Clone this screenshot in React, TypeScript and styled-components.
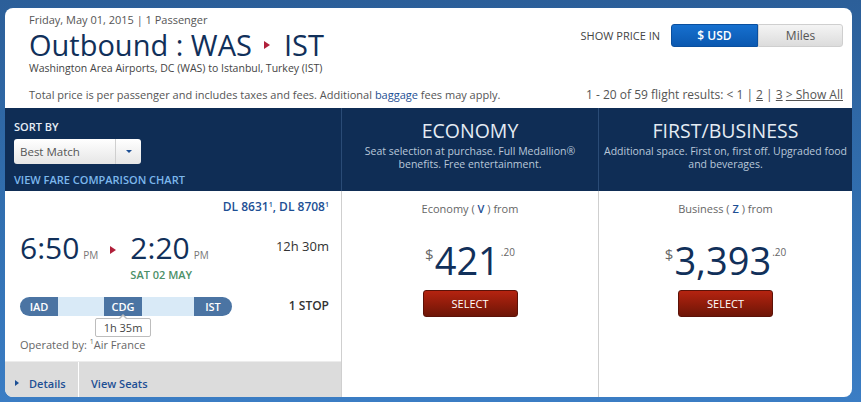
import React from "react";
import styled, { createGlobalStyle } from "styled-components";

const GlobalStyle = createGlobalStyle`
  html, body {
    margin: 0;
    padding: 0;
  }
  body {
    width: 861px;
    height: 402px;
    overflow: hidden;
    font-family: "Open Sans", "Liberation Sans", sans-serif;
    background: linear-gradient(180deg, #2c5f99 0%, #3271b3 60%, #3b7dc4 100%);
  }
`;

const Page = styled.div`
  padding: 8px 9px 5px 5px;
`;

const Panel = styled.div`
  width: 847px;
  height: 389px;
  background: #fff;
  border-radius: 8px;
  overflow: hidden;
  display: flex;
  flex-direction: column;
`;

const Top = styled.div`
  height: 101px;
  display: flex;
  flex-direction: column;
  padding: 4px 9px 0 24px;
  box-sizing: border-box;
`;

const TopRow = styled.div`
  display: flex;
  justify-content: space-between;
  align-items: flex-start;
`;

const Meta = styled.div`
  font-size: 11px;
  color: #555;
  line-height: 16px;
`;

const Title = styled.h1`
  margin: 1px 0 0 0;
  font-size: 29px;
  font-weight: 400;
  color: #11305a;
  line-height: 32px;
  display: flex;
  align-items: center;
`;

const Arrow = styled.span<{ $gap?: string }>`
  display: inline-block;
  width: 0;
  height: 0;
  border-top: 4px solid transparent;
  border-bottom: 4px solid transparent;
  border-left: 6px solid #b0203a;
  margin: ${(p) => p.$gap || "0 14px 0 12px"};
`;

const SubTitle = styled.div`
  font-size: 10.5px;
  color: #444;
  line-height: 14px;
`;

const PriceToggle = styled.div`
  display: flex;
  align-items: center;
  margin-top: 12px;
`;

const ToggleLabel = styled.span`
  font-size: 11px;
  color: #444;
  margin-right: 11px;
`;

const ToggleBtn = styled.div<{ $active?: boolean }>`
  width: ${(p) => (p.$active ? "85px" : "83px")};
  height: 21px;
  display: flex;
  align-items: center;
  justify-content: center;
  font-size: 12px;
  font-weight: ${(p) => (p.$active ? 600 : 400)};
  color: ${(p) => (p.$active ? "#fff" : "#555")};
  background: ${(p) =>
    p.$active
      ? "linear-gradient(180deg, #1670cf 0%, #0b58b0 100%)"
      : "linear-gradient(180deg, #f4f4f4 0%, #dcdcdc 100%)"};
  border: 1px solid ${(p) => (p.$active ? "#0a4f9e" : "#cfcfcf")};
  border-radius: ${(p) => (p.$active ? "3px 0 0 3px" : "0 3px 3px 0")};
`;

const InfoRow = styled.div`
  margin-top: auto;
  margin-bottom: 5px;
  display: flex;
  justify-content: space-between;
  align-items: baseline;
  font-size: 11px;
  color: #555;
`;

const Link = styled.a`
  color: #1d4f94;
  text-decoration: none;
`;

const Pager = styled.span`
  font-size: 12px;
  color: #555;
  a {
    color: #555;
    text-decoration: underline;
  }
`;

const Grid = styled.div`
  display: grid;
  grid-template-columns: 336px 1px 256px 1px 253px;
  flex: 1;
`;

const HeadCell = styled.div<{ $center?: boolean }>`
  height: 83px;
  background: #0f2d55;
  color: #fff;
  box-sizing: border-box;
  padding: ${(p) => (p.$center ? "11px 0 0" : "12px 9px 0")};
  text-align: ${(p) => (p.$center ? "center" : "left")};
  white-space: nowrap;
`;

const Divider = styled.div<{ $dark?: boolean }>`
  background: ${(p) => (p.$dark ? "#2a4b76" : "#cfcfcf")};
`;

const SortLabel = styled.div`
  font-size: 11px;
  font-weight: 600;
  color: #e6edf5;
  line-height: 14px;
`;

const Select = styled.div`
  margin-top: 5px;
  width: 127px;
  height: 25px;
  display: flex;
  border-radius: 3px;
  background: linear-gradient(180deg, #ffffff 0%, #e6e6e6 100%);
  overflow: hidden;
`;

const SelectText = styled.div`
  flex: 1;
  font-size: 11.5px;
  color: #555;
  padding-left: 6px;
  display: flex;
  align-items: center;
`;

const SelectArrow = styled.div`
  width: 25px;
  border-left: 1px solid #cfcfcf;
  display: flex;
  align-items: center;
  justify-content: center;
  &::after {
    content: "";
    border-left: 3px solid transparent;
    border-right: 3px solid transparent;
    border-top: 3px solid #1d4f94;
  }
`;

const FareLink = styled.div`
  margin-top: 8px;
  font-size: 11px;
  font-weight: 600;
  color: #7cb7ec;
`;

const CabinName = styled.div`
  font-size: 19.5px;
  color: #e4ebf3;
  line-height: 24px;
`;

const CabinDesc = styled.div`
  font-size: 10.5px;
  line-height: 13px;
  color: #b9c8da;
  margin-top: 2px;
`;

const FlightCell = styled.div`
  display: flex;
  flex-direction: column;
`;

const FlightBody = styled.div`
  height: 170px;
  box-sizing: border-box;
  padding: 8px 12px 0 15px;
  display: flex;
  flex-direction: column;
`;

const FlightNums = styled.div`
  text-align: right;
  font-size: 12px;
  font-weight: 600;
  color: #1d4f94;
  line-height: 16px;
  sup {
    font-size: 7px;
    vertical-align: top;
    position: relative;
    top: -2px;
  }
`;

const TimesRow = styled.div`
  display: flex;
  justify-content: space-between;
  margin-top: 16px;
`;

const Times = styled.div`
  display: flex;
  align-items: flex-start;
`;

const TimeBlock = styled.div`
  display: flex;
  flex-direction: column;
`;

const Time = styled.div`
  font-size: 30px;
  color: #11305a;
  line-height: 34px;
  display: flex;
  align-items: baseline;
`;

const Ampm = styled.span`
  font-size: 10px;
  color: #777;
  margin-left: 4px;
`;

const ArrivalDate = styled.div`
  font-size: 11px;
  font-weight: 600;
  color: #4c9068;
  line-height: 14px;
  margin-top: -4px;
`;

const Duration = styled.div`
  font-size: 13px;
  color: #333;
  line-height: 18px;
  margin-top: 6px;
`;

const RouteRow = styled.div`
  display: flex;
  justify-content: space-between;
  align-items: center;
  margin-top: 15px;
`;

const RouteBar = styled.div`
  position: relative;
  width: 212px;
  height: 19px;
  background: #d9eaf7;
  border-radius: 10px;
  display: flex;
`;

const Airport = styled.div<{ $pos: "start" | "mid" | "end" }>`
  width: 38px;
  height: 19px;
  background: #4b74a3;
  color: #fff;
  font-size: 11px;
  font-weight: 600;
  display: flex;
  align-items: center;
  justify-content: center;
  margin-left: ${(p) => (p.$pos === "mid" ? "46px" : p.$pos === "end" ? "auto" : "0")};
  border-radius: ${(p) =>
    p.$pos === "start" ? "10px 0 0 10px" : p.$pos === "end" ? "0 10px 10px 0" : "0"};
`;

const Layover = styled.div`
  position: absolute;
  left: 75px;
  top: 21px;
  width: 54px;
  height: 17px;
  border: 1px solid #bdbdbd;
  border-radius: 2px;
  background: #fff;
  font-size: 11px;
  color: #444;
  display: flex;
  align-items: center;
  justify-content: center;
  &::before {
    content: "";
    position: absolute;
    top: -5px;
    left: 23px;
    border-left: 4px solid transparent;
    border-right: 4px solid transparent;
    border-bottom: 4px solid #bdbdbd;
  }
  &::after {
    content: "";
    position: absolute;
    top: -3px;
    left: 24px;
    border-left: 3px solid transparent;
    border-right: 3px solid transparent;
    border-bottom: 3px solid #fff;
  }
`;

const Stops = styled.div`
  font-size: 12px;
  font-weight: 600;
  color: #333;
  margin-top: -3px;
`;

const Operated = styled.div`
  margin-top: 21px;
  font-size: 11px;
  color: #666;
  sup {
    font-size: 7px;
  }
`;

const Footer = styled.div`
  height: 35px;
  background: #dcdcdc;
  display: flex;
  border-top: 1px solid #ececec;
`;

const FooterItem = styled.div<{ $width?: string }>`
  width: ${(p) => p.$width || "auto"};
  padding-left: ${(p) => (p.$width ? "10px" : "12px")};
  display: flex;
  align-items: center;
  font-size: 11px;
  font-weight: 600;
  color: #1d4f94;
  border-right: ${(p) => (p.$width ? "1px solid #fff" : "none")};
  padding-top: 7px;
`;

const SmallArrow = styled.span`
  border-top: 3px solid transparent;
  border-bottom: 3px solid transparent;
  border-left: 4px solid #1d4f94;
  margin-right: 10px;
`;

const FareCell = styled.div`
  display: flex;
  flex-direction: column;
  align-items: center;
  padding-top: 10px;
`;

const FareClass = styled.div`
  font-size: 11px;
  color: #666;
  b {
    font-weight: 600;
    color: #1d4f94;
  }
`;

const Price = styled.div`
  margin-top: 22px;
  display: flex;
  align-items: flex-start;
  color: #11305a;
`;

const Currency = styled.span`
  font-size: 15px;
  color: #666;
  margin-top: 6px;
  margin-right: 1px;
`;

const Amount = styled.span`
  font-size: 38px;
  line-height: 44px;
`;

const Cents = styled.span`
  font-size: 10px;
  color: #666;
  margin-top: 7px;
  margin-left: 1px;
`;

const SelectBtn = styled.button`
  margin-top: 8px;
  width: 95px;
  height: 27px;
  border: 1px solid #5c1208;
  border-radius: 3px;
  background: linear-gradient(180deg, #b52310 0%, #8a1b0a 60%, #6e1607 100%);
  color: #fff;
  font-family: inherit;
  font-size: 11px;
  cursor: pointer;
`;

export default function App() {
  return (
    <>
      <GlobalStyle />
      <Page>
        <Panel>
          <Top>
            <TopRow>
              <div>
                <Meta>Friday, May 01, 2015 | 1 Passenger</Meta>
                <Title>
                  Outbound : WAS
                  <Arrow />
                  IST
                </Title>
                <SubTitle>
                  Washington Area Airports, DC (WAS) to Istanbul, Turkey (IST)
                </SubTitle>
              </div>
              <PriceToggle>
                <ToggleLabel>SHOW PRICE IN</ToggleLabel>
                <ToggleBtn $active>$ USD</ToggleBtn>
                <ToggleBtn>Miles</ToggleBtn>
              </PriceToggle>
            </TopRow>
            <InfoRow>
              <span>
                Total price is per passenger and includes taxes and fees.
                Additional <Link>baggage</Link> fees may apply.
              </span>
              <Pager>
                1 - 20 of 59 flight results: &lt; 1 | <a>2</a> | <a>3</a>{" "}
                <a>&gt; Show All</a>
              </Pager>
            </InfoRow>
          </Top>
          <Grid>
            <HeadCell>
              <SortLabel>SORT BY</SortLabel>
              <Select>
                <SelectText>Best Match</SelectText>
                <SelectArrow />
              </Select>
              <FareLink>VIEW FARE COMPARISON CHART</FareLink>
            </HeadCell>
            <Divider $dark />
            <HeadCell $center>
              <CabinName>ECONOMY</CabinName>
              <CabinDesc>
                Seat selection at purchase. Full Medallion®
                <br />
                benefits. Free entertainment.
              </CabinDesc>
            </HeadCell>
            <Divider $dark />
            <HeadCell $center>
              <CabinName>FIRST/BUSINESS</CabinName>
              <CabinDesc>
                Additional space. First on, first off. Upgraded food
                <br />
                and beverages.
              </CabinDesc>
            </HeadCell>

            <FlightCell>
              <FlightBody>
                <FlightNums>
                  DL 8631<sup>1</sup>, DL 8708<sup>1</sup>
                </FlightNums>
                <TimesRow>
                  <Times>
                    <TimeBlock>
                      <Time>
                        6:50<Ampm>PM</Ampm>
                      </Time>
                    </TimeBlock>
                    <Arrow $gap="15px 14px 0 12px" />
                    <TimeBlock>
                      <Time>
                        2:20<Ampm>PM</Ampm>
                      </Time>
                      <ArrivalDate>SAT 02 MAY</ArrivalDate>
                    </TimeBlock>
                  </Times>
                  <Duration>12h 30m</Duration>
                </TimesRow>
                <RouteRow>
                  <RouteBar>
                    <Airport $pos="start">IAD</Airport>
                    <Airport $pos="mid">CDG</Airport>
                    <Airport $pos="end">IST</Airport>
                    <Layover>1h 35m</Layover>
                  </RouteBar>
                  <Stops>1 STOP</Stops>
                </RouteRow>
                <Operated>
                  Operated by: <sup>1</sup>Air France
                </Operated>
              </FlightBody>
              <Footer>
                <FooterItem $width="63px">
                  <SmallArrow />
                  Details
                </FooterItem>
                <FooterItem>View Seats</FooterItem>
              </Footer>
            </FlightCell>
            <Divider />
            <FareCell>
              <FareClass>
                Economy ( <b>V</b> ) from
              </FareClass>
              <Price>
                <Currency>$</Currency>
                <Amount>421</Amount>
                <Cents>.20</Cents>
              </Price>
              <SelectBtn>SELECT</SelectBtn>
            </FareCell>
            <Divider />
            <FareCell>
              <FareClass>
                Business ( <b>Z</b> ) from
              </FareClass>
              <Price>
                <Currency>$</Currency>
                <Amount>3,393</Amount>
                <Cents>.20</Cents>
              </Price>
              <SelectBtn>SELECT</SelectBtn>
            </FareCell>
          </Grid>
        </Panel>
      </Page>
    </>
  );
}
